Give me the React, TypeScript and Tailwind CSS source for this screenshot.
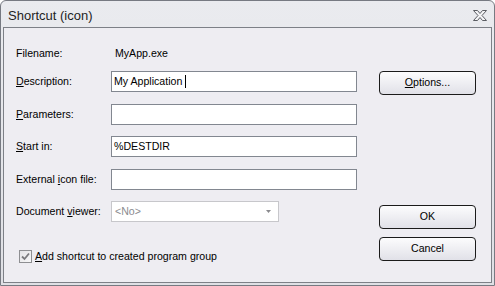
import React from 'react';

/* ─── Small pieces ──────────────────────────────────────────── */

const Label: React.FC<{ children: React.ReactNode }> = ({ children }) => (
    <div className="w-[95px] shrink-0 text-black">{children}</div>
);

const TextBox: React.FC<{ value?: string; caret?: boolean }> = ({ value = '', caret }) => (
    <div className="w-[246px] h-[21px] flex items-center bg-white border border-[#828790] pl-[2px] text-black">
        <span>{value}</span>
        {caret && <span className="ml-[3px] w-px h-[13px] bg-black" />}
    </div>
);

const DlgButton: React.FC<{ children: React.ReactNode }> = ({ children }) => (
    <div className="w-[97px] h-[24px] flex items-center justify-center rounded-[4px] border border-[#1b1b1b] bg-gradient-to-b from-[#fcfcfd] to-[#e1e1e8] text-black">
        {children}
    </div>
);

/* ─── Dialog ────────────────────────────────────────────────── */

export default function App() {
    return (
        <div className="w-[495px] h-[286px] flex flex-col rounded-t-[6px] border border-[#777a82] bg-gradient-to-b from-[#eaebef] to-[#dfe0e5] px-[2px] pb-[2px] font-['Liberation_Sans',Arial,sans-serif]">
            {/* Title bar */}
            <div className="h-[26px] shrink-0 flex items-center justify-between pl-[5px] pr-[5px]">
                <span className="text-[13px] text-[#1e1e1e] pt-[3px]">Shortcut (icon)</span>
                <svg width="14" height="11" viewBox="0 0 14 11" className="mt-[3px]">
                    <polygon
                        points="0.5,0.5 4.5,0.5 7,3.5 9.5,0.5 13.5,0.5 9,5.5 13.5,10.5 9.5,10.5 7,7.5 4.5,10.5 0.5,10.5 5,5.5"
                        fill="#f4f4f6"
                        stroke="#5b5d63"
                        strokeWidth="1"
                    />
                </svg>
            </div>

            {/* Client area */}
            <div className="flex-1 flex border border-[#7d8087] bg-[#eeedf2] text-[10.6px]">
                {/* Form */}
                <div className="flex flex-col pl-[12px] pt-[15px] w-[365px]">
                    <div className="h-[21px] flex items-center">
                        <Label>Filename:</Label>
                        <span className="pl-[4px] text-black">MyApp.exe</span>
                    </div>
                    <div className="h-[21px] flex items-center mt-[7px]">
                        <Label><span className="underline">D</span>escription:</Label>
                        <TextBox value="My Application" caret />
                    </div>
                    <div className="h-[21px] flex items-center mt-[12px]">
                        <Label><span className="underline">P</span>arameters:</Label>
                        <TextBox />
                    </div>
                    <div className="h-[21px] flex items-center mt-[11px]">
                        <Label><span className="underline">S</span>tart in:</Label>
                        <TextBox value="%DESTDIR" />
                    </div>
                    <div className="h-[21px] flex items-center mt-[12px]">
                        <Label>External <span className="underline">i</span>con file:</Label>
                        <TextBox />
                    </div>
                    <div className="h-[21px] flex items-center mt-[11px]">
                        <Label>Document <span className="underline">v</span>iewer:</Label>
                        <div className="w-[168px] h-[21px] flex items-center justify-between bg-white border border-[#c7c7cb] pl-[3px] pr-[7px] text-[#8b8b8f]">
                            <span>&lt;No&gt;</span>
                            <svg width="5" height="3" viewBox="0 0 5 3">
                                <polygon points="0,0 5,0 2.5,3" fill="#8a8a8e" />
                            </svg>
                        </div>
                    </div>
                    <div className="flex items-center mt-[27px] pl-[3px]">
                        <div className="w-[13px] h-[13px] flex items-center justify-center border border-[#8e8f92] bg-gradient-to-br from-[#e3e3e6] to-[#f7f7f8]">
                            <svg width="9" height="9" viewBox="0 0 9 9">
                                <polyline points="1,4.5 3.5,7 8,1.5" fill="none" stroke="#7a7a7e" strokeWidth="1.8" />
                            </svg>
                        </div>
                        <span className="ml-[3px] text-black"><span className="underline">A</span>dd shortcut to created program group</span>
                    </div>
                </div>

                {/* Buttons */}
                <div className="flex flex-col pl-[10px] pt-[43px] pb-[21px]">
                    <DlgButton><span className="underline">O</span>ptions...</DlgButton>
                    <div className="flex-1" />
                    <DlgButton>OK</DlgButton>
                    <div className="mt-[8px]">
                        <DlgButton>Cancel</DlgButton>
                    </div>
                </div>
            </div>
        </div>
    );
}
